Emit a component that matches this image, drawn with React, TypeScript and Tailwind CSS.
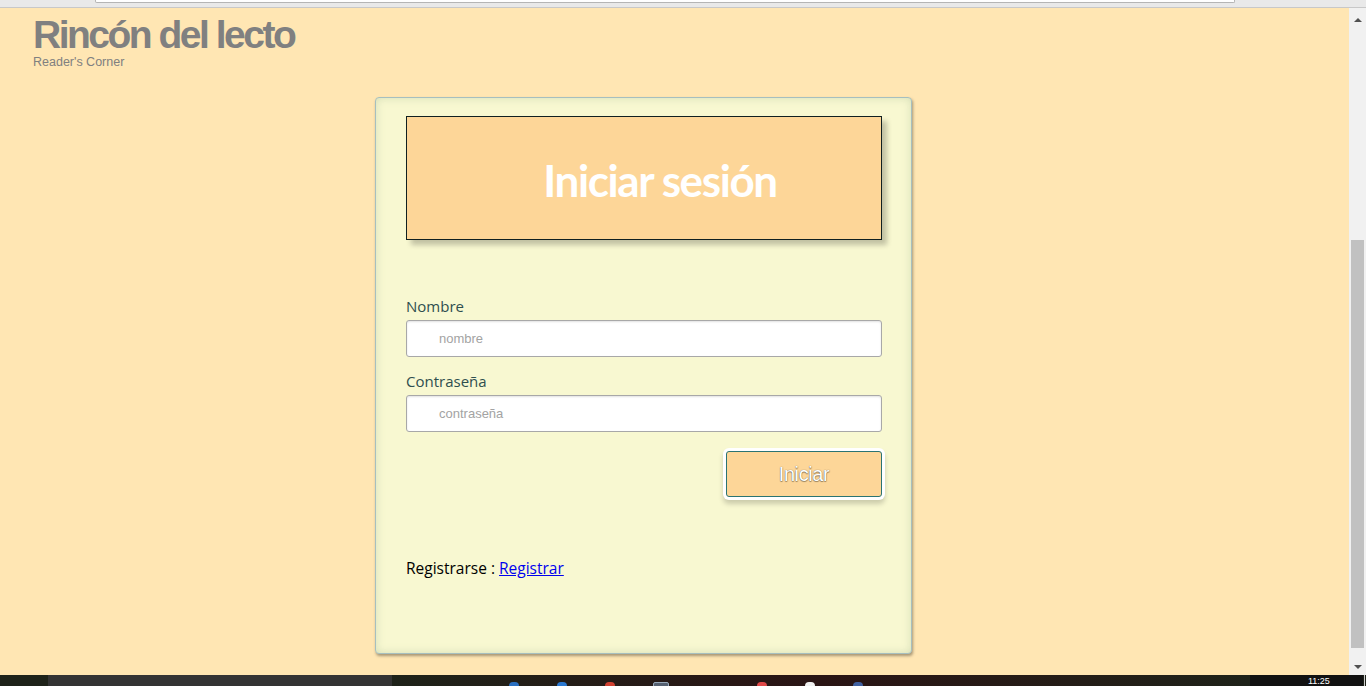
import React from "react";

export default function App() {
  return (
    <div className="flex h-[686px] w-[1366px] flex-col overflow-hidden bg-[#ffe6b3]">
      {/* browser top strip */}
      <div className="flex h-[8px] w-full shrink-0 items-start border-b border-[#c8c8c8] bg-[#e9e9e9] pl-[95px]">
        <div className="h-[3px] w-[1140px] rounded-b-[2px] border-x border-b border-[#b5b5b5] bg-white" />
      </div>

      <div className="flex h-[667px] w-full shrink-0">
        {/* page */}
        <div className="h-full w-[1349px] overflow-hidden bg-[#ffe6b3] pt-[7px]">
          <div className="pl-[33px]">
            <h1 className="font-['Liberation_Sans',Arial,sans-serif] text-[39px] font-bold leading-[39px] tracking-[-2.5px] text-[#808080]">
              Rincón del lecto
            </h1>
            <p className="mt-[2px] font-['Liberation_Sans',Arial,sans-serif] text-[12.5px] leading-[13px] text-[#808080]">
              Reader's Corner
            </p>
          </div>

          <div className="ml-[375px] mt-[28px] flex h-[557px] w-[537px] flex-col rounded-[4px] border border-[#a6bfbf] bg-[#f8f8d1] px-[30px] pt-[18px] shadow-[1px_2px_3px_rgba(0,0,0,0.35),inset_0_0_8px_rgba(170,190,150,0.45)]">
            <div className="flex h-[124px] w-[476px] items-center justify-center border border-[#102020] bg-[#fdd698] pl-[32px] pt-[4px] shadow-[5px_5px_5px_rgba(0,0,0,0.22)]">
              <span className="font-['Lato',sans-serif] text-[44px] font-bold tracking-[-1.4px] text-white">
                Iniciar sesión
              </span>
            </div>

            <label className="mt-[55px] font-['Open_Sans',sans-serif] text-[15px] leading-[22px] text-[#2f4f4f]">
              Nombre
            </label>
            <div className="mt-[3px] flex h-[37px] w-[476px] items-center rounded-[3px] border border-[#a8a8a8] bg-white pl-[32px] shadow-[inset_0_1px_2px_rgba(0,0,0,0.12)]">
              <span className="font-['Liberation_Sans',Arial,sans-serif] text-[13px] text-[#a3a3a3]">nombre</span>
            </div>

            <label className="mt-[13px] font-['Open_Sans',sans-serif] text-[15px] leading-[22px] text-[#2f4f4f]">
              Contraseña
            </label>
            <div className="mt-[3px] flex h-[37px] w-[476px] items-center rounded-[3px] border border-[#a8a8a8] bg-white pl-[32px] shadow-[inset_0_1px_2px_rgba(0,0,0,0.12)]">
              <span className="font-['Liberation_Sans',Arial,sans-serif] text-[13px] text-[#a3a3a3]">contraseña</span>
            </div>

            <div className="mt-[19px] flex w-[476px] justify-end">
              <button className="flex h-[46px] w-[156px] items-center justify-center rounded-[3px] border border-[#2b7472] bg-[#fdd698] shadow-[0_0_0_3px_#ffffff,0_4px_5px_3px_rgba(0,0,0,0.18)]">
                <span className="font-['Liberation_Sans',Arial,sans-serif] text-[20px] tracking-[-0.4px] text-white [text-shadow:0_0_1px_rgba(0,0,0,0.6),0_1px_1px_rgba(0,0,0,0.35)]">
                  Iniciar
                </span>
              </button>
            </div>

            <div className="mt-[60px] font-['Open_Sans',sans-serif] text-[15.5px] leading-[22px] text-black">
              Registrarse :{" "}
              <a href="#" className="text-[#0000ee] underline">
                Registrar
              </a>
            </div>
          </div>
        </div>

        {/* scrollbar */}
        <div className="flex h-full w-[17px] flex-col items-center bg-[#f1f1f1] pb-[6px] pt-[10px]">
          <div className="h-0 w-0 border-x-[4px] border-b-[4px] border-x-transparent border-b-[#505050]" />
          <div className="mt-[218px] h-[408px] w-[13px] bg-[#c1c1c1]" />
          <div className="flex-1" />
          <div className="h-0 w-0 border-x-[4px] border-t-[4px] border-x-transparent border-t-[#505050]" />
        </div>
      </div>

      {/* taskbar */}
      <div className="flex h-[11px] w-full shrink-0 items-start overflow-hidden bg-[#1e2219]">
        <div className="ml-[48px] h-full w-[344px] bg-[#333333]" />
        <div className="flex h-full w-[858px] items-start gap-[38px] bg-gradient-to-r from-[#1e2219] via-[#2a1414] to-[#1e2219] pl-[117px] pt-[7px]">
          <div className="h-[8px] w-[10px] shrink-0 rounded-full bg-[#2a6fc0]" />
          <div className="h-[8px] w-[10px] shrink-0 rounded-full bg-[#2a78d0]" />
          <div className="h-[8px] w-[10px] shrink-0 rounded-full bg-[#d04030]" />
          <div className="h-[8px] w-[16px] shrink-0 rounded-[2px] border border-[#99aabb] bg-[#556070]" />
          <div className="ml-[50px] h-[8px] w-[10px] shrink-0 rounded-full bg-[#e04848]" />
          <div className="h-[8px] w-[10px] shrink-0 rounded-full bg-[#f0f0f0]" />
          <div className="h-[8px] w-[10px] shrink-0 rounded-full bg-[#4060a0]" />
        </div>
        <div className="flex h-full w-[113px] items-start bg-[#111111] pl-[58px] pt-[1px]">
          <span className="font-['Liberation_Sans',Arial,sans-serif] text-[9px] leading-[10px] text-white">11:25</span>
        </div>
        <div className="ml-[1px] h-full w-[1px] bg-[#cfcfcf]" />
      </div>
    </div>
  );
}
